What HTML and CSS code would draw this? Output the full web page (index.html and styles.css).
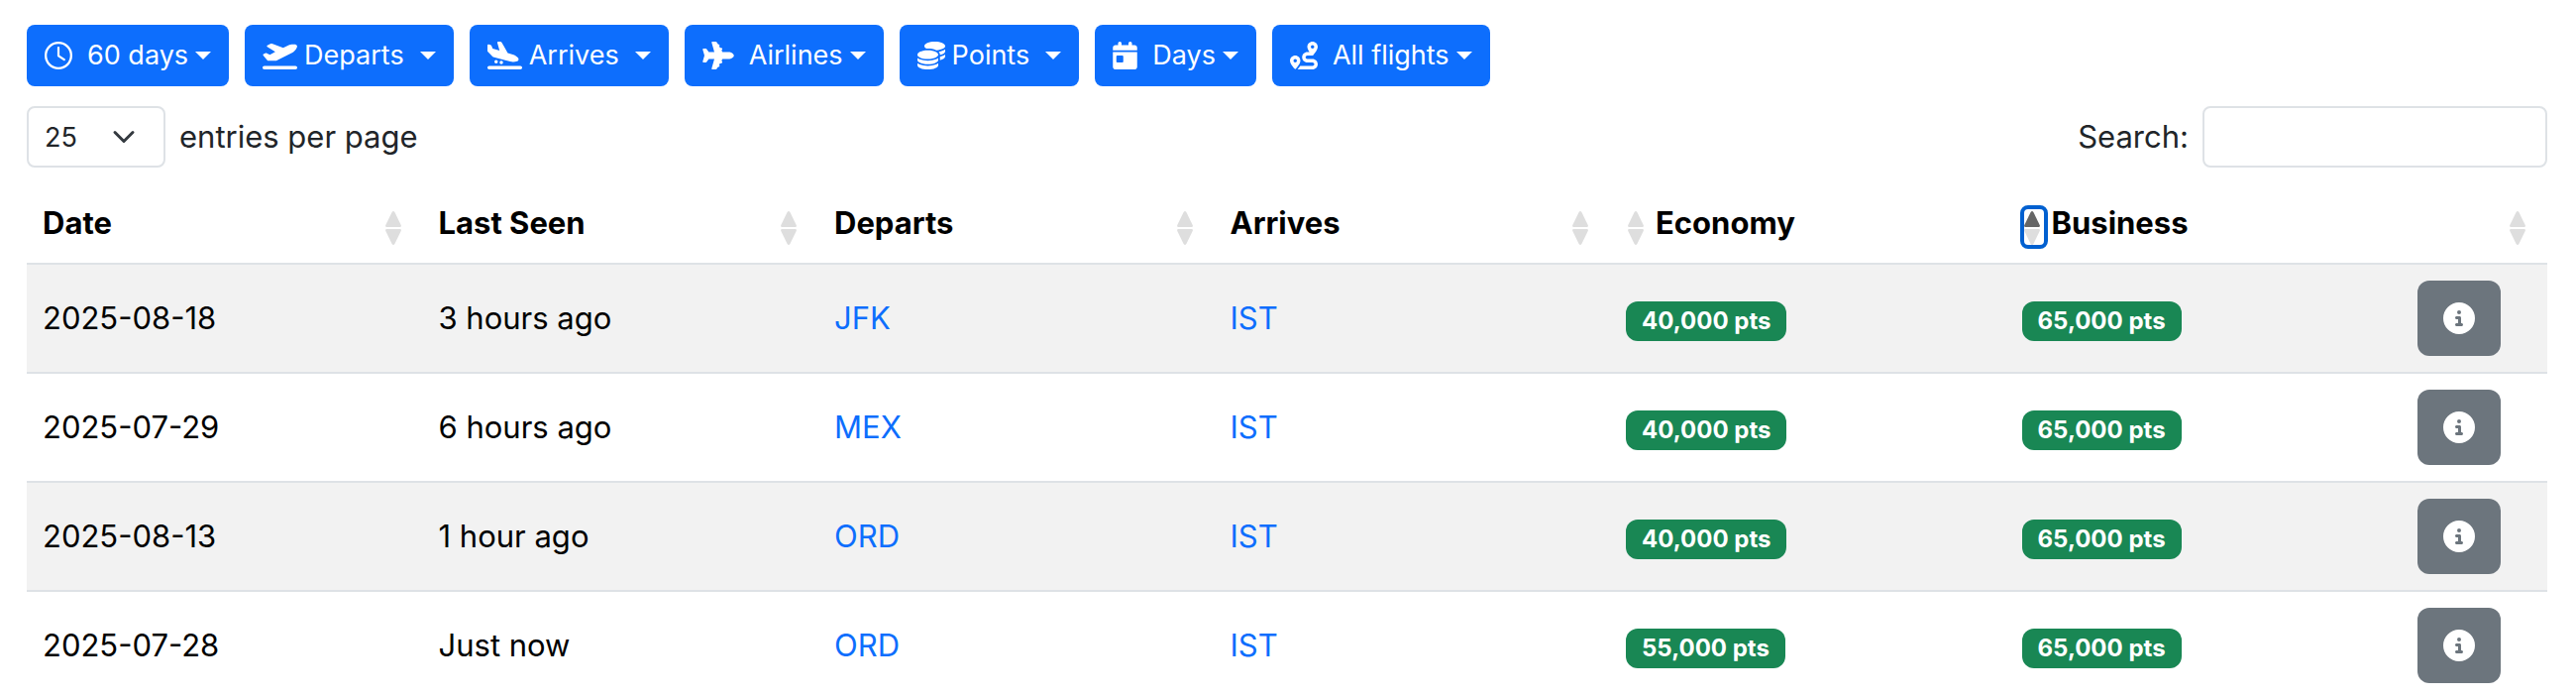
FILE: index.html
```
<!DOCTYPE html>
<html lang="en">
<head>
  <meta charset="UTF-8">
  <meta name="viewport" content="width=device-width, initial-scale=1.0">
  <title>Award Flights</title>
  <link rel="stylesheet" href="styles.css">
</head>
<body>
  <!-- Shared icons -->
  <svg class="sprite" aria-hidden="true">
    <symbol id="icon-sort" viewBox="0 0 20 36">
      <path class="up" d="M6.600 3q1.400-2 2.800 0l6.300 13q.800 2-1.200 2h-13q-2 0-1.200-2z"/>
      <path class="down" d="M6.600 35q1.400 2 2.800 0l6.300-13q.800-2-1.200-2h-13q-2 0-1.200 2z"/>
    </symbol>
    <symbol id="icon-info" viewBox="0 0 512 512">
      <path d="M256 512A256 256 0 1 0 256 0a256 256 0 1 0 0 512zM216 336l24 0 0-64-24 0c-13.300 0-24-10.700-24-24s10.700-24 24-24l48 0c13.300 0 24 10.700 24 24l0 88 8 0c13.300 0 24 10.700 24 24s-10.700 24-24 24l-80 0c-13.300 0-24-10.700-24-24s10.700-24 24-24zm40-208a32 32 0 1 1 0 64 32 32 0 1 1 0-64z"/>
    </symbol>
  </svg>

  <div class="filters">
    <button class="btn" type="button">
      <svg class="icon" viewBox="0 0 512 512"><path d="M470 256A214 214 0 1 1 42 256a214 214 0 1 1 428 0zM0 256a256 256 0 1 0 512 0A256 256 0 1 0 0 256zM236 112l0 150c0 7 3.500 13 9.500 17l104 70c10 6.500 23 4 29.500-6s4-23-6-29.500L276 250 276 112c0-11-9-20-20-20s-20 9-20 20z"/></svg>
      <span class="label">60 days</span>
    </button>
    <button class="btn tight" type="button">
      <svg class="icon wide" viewBox="0 0 640 512"><path d="M381 114.900L186.100 41.800c-16.700-6.200-35.200-5.300-51.100 2.700L89.100 67.400C78 73 77.200 88.500 87.600 95.200l146.900 94.500L136 240 77.800 214.100c-8.700-3.900-18.800-3.700-27.300 .6L18.300 230.800c-9.300 4.700-11.800 16.800-5 24.700l73.100 85.300c6.100 7.100 15 11.200 24.300 11.200l137.700 0c5 0 9.900-1.200 14.300-3.400L535.600 212.200c46.500-23.300 82.500-63.300 100.800-112C645.900 75 627.200 48 600.200 48l-57.400 0c-20.200 0-40.200 4.800-58.200 14L381 114.900zM0 480c0 17.700 14.300 32 32 32l576 0c17.700 0 32-14.300 32-32s-14.300-32-32-32L32 448c-17.700 0-32 14.300-32 32z"/></svg>
      <span class="label">Departs</span>
    </button>
    <button class="btn tight" type="button">
      <svg class="icon wide" viewBox="0 0 640 512"><path d="M.3 166.900L0 68C0 57.700 9.500 50.100 19.500 52.300l35.600 7.900c10.600 2.300 19.200 9.900 23 20L96 128l127.300 37.600L181.800 20.400C178.900 10.200 186.600 0 197.200 0l40.100 0c11.600 0 22.200 6.200 27.900 16.300l109 193.800 107.200 31.700c15.900 4.700 30.800 12.500 43.700 22.800l34.400 27.600c24 19.200 18.100 57.300-10.700 68.200c-41.200 15.600-86.200 18.100-128.800 7L121.700 289.800c-11-2.900-21.200-8.700-29.300-16.900L9.500 189.400c-5.900-6-9.300-14.100-9.300-22.500zM32 448l576 0c17.700 0 32 14.300 32 32s-14.300 32-32 32L32 512c-17.700 0-32-14.300-32-32s14.300-32 32-32zm96-80a32 32 0 1 1 64 0 32 32 0 1 1 -64 0zm128-16a32 32 0 1 1 0 64 32 32 0 1 1 0-64z"/></svg>
      <span class="label">Arrives</span>
    </button>
    <button class="btn" type="button">
      <svg class="icon plane" viewBox="0 0 576 512"><path d="M482.300 192c34.200 0 93.700 29 93.700 64c0 36-59.500 64-93.700 64l-116.600 0L265.200 495.900c-5.700 10-16.300 16.100-27.800 16.100l-56.200 0c-10.600 0-18.300-10.200-15.400-20.400l49-171.600L112 320 68.800 377.600c-3 4-7.800 6.400-12.800 6.400l-42 0c-7.800 0-14-6.300-14-14c0-1.300 .2-2.600 .5-3.900L32 256 .5 145.900c-.4-1.300-.5-2.600-.5-3.900c0-7.800 6.300-14 14-14l42 0c5 0 9.800 2.400 12.800 6.400L112 192l102.900 0-49-171.600C162.900 10.200 170.600 0 181.200 0l56.200 0c11.500 0 22.100 6.200 27.800 16.100L365.700 192l116.600 0z"/><path d="M270 48h20a22 22 0 0 1 0 44h-20zM310 112h28a24 24 0 0 1 0 48h-28zM270 464h20a22 22 0 0 0 0-44h-20zM310 400h28a24 24 0 0 0 0-48h-28z"/></svg>
      <span class="label">Airlines</span>
    </button>
    <button class="btn tight" type="button">
      <svg class="icon" viewBox="0 0 512 512"><path d="M512 80c0 18-14.300 34.600-38.400 48c-29.100 16.100-72.500 27.500-122.300 30.900c-3.700-1.800-7.400-3.500-11.300-5C300.600 137.400 248.200 128 192 128c-8.300 0-16.400 .2-24.500 .6l-1.100-.6C142.300 114.600 128 98 128 80c0-44.200 86-80 192-80S512 35.800 512 80zM160.700 161.100c10.200-.7 20.700-1.100 31.300-1.100c62.200 0 117.400 12.300 152.500 31.400C369.300 204.900 384 221.700 384 240c0 4-.7 7.900-2.100 11.700c-4.600 13.200-17 25.300-35 35.500c-.4 .2-.9 .5-1.300 .7c-35 19.400-90.800 32-153.600 32c-59.600 0-112.900-11.300-148.200-29.100c-1.900-.9-3.700-1.900-5.500-2.900C14.300 274.600 0 258 0 240c0-34.800 53.400-64.500 128-75.400c10.500-1.500 21.400-2.700 32.700-3.500zM416 240c0-21.900-10.600-39.900-24.100-53.400c28.300-4.400 54.200-11.400 76.200-20.500c16.300-6.800 31.500-15.200 43.900-25.500l0 35.400c0 19.300-16.500 37.100-43.800 50.900c-14.600 7.400-32.400 13.700-52.400 18.500c.1-1.800 .2-3.500 .2-5.300zm-32 96c0 18-14.300 34.600-38.400 48c-1.800 1-3.600 1.900-5.500 2.900C304.900 404.700 251.600 416 192 416c-62.800 0-118.600-12.600-153.600-32C14.300 370.600 0 354 0 336l0-35.400c12.500 10.300 27.600 18.700 43.900 25.500C83.400 342.600 135.800 352 192 352s108.600-9.400 148.100-25.900c7.800-3.200 15.300-6.900 22.400-10.900c6.100-3.400 11.800-7.200 17.200-11.200c1.500-1.100 2.900-2.300 4.300-3.400l0 3.400 0 5.700 0 26.300zm32 0l0-32 0-25.900c19-4.200 36.500-9.500 52.100-16c16.300-6.800 31.500-15.200 43.900-25.500l0 35.400c0 10.500-5 21-14.900 30.900c-16.300 16.300-45 29.700-81.300 38.400c.1-1.700 .2-3.500 .2-5.300zM192 448c56.200 0 108.600-9.400 148.100-25.900c16.300-6.800 31.500-15.200 43.900-25.500l0 35.400c0 44.200-86 80-192 80S0 476.200 0 432l0-35.400c12.500 10.300 27.600 18.700 43.900 25.500C83.400 438.600 135.800 448 192 448z"/></svg>
      <span class="label">Points</span>
    </button>
    <button class="btn" type="button">
      <svg class="icon narrow" viewBox="0 0 448 512"><path d="M128 0c17.700 0 32 14.300 32 32l0 32 128 0 0-32c0-17.700 14.300-32 32-32s32 14.300 32 32l0 32 48 0c26.500 0 48 21.500 48 48l0 48L0 160l0-48C0 85.500 21.500 64 48 64l48 0 0-32c0-17.700 14.300-32 32-32zM0 192l448 0 0 272c0 26.500-21.500 48-48 48L48 512c-26.500 0-48-21.500-48-48L0 192zm80 64c-8.800 0-16 7.200-16 16l0 96c0 8.800 7.200 16 16 16l96 0c8.800 0 16-7.200 16-16l0-96c0-8.800-7.200-16-16-16l-96 0z"/></svg>
      <span class="label">Days</span>
    </button>
    <button class="btn" type="button">
      <svg class="icon" viewBox="0 0 512 512"><path d="M512 96c0 50.200-59.100 125.100-84.600 155c-3.800 4.400-9.400 6.100-14.500 5L320 256c-17.700 0-32 14.300-32 32s14.300 32 32 32l96 0c53 0 96 43 96 96s-43 96-96 96l-276.400 0c8.700-9.900 19.300-22.600 30-36.800c6.300-8.400 12.800-17.600 19-27.200L416 448c17.700 0 32-14.300 32-32s-14.300-32-32-32l-96 0c-53 0-96-43-96-96s43-96 96-96l39.800 0c-21-31.500-39.800-67.700-39.800-96c0-53 43-96 96-96s96 43 96 96zM117.100 489.100c-3.800 4.300-7.200 8.100-10.100 11.300l-1.800 2-.2-.2c-6 4.600-14.600 4-20-1.800C59.800 473 0 402.500 0 352c0-53 43-96 96-96s96 43 96 96c0 30-21.100 67-43.500 97.900c-10.700 14.700-21.700 28-30.800 38.500l-.6 .7zM128 352a32 32 0 1 0 -64 0 32 32 0 1 0 64 0zM416 128a32 32 0 1 0 0-64 32 32 0 1 0 0 64z"/></svg>
      <span class="label">All flights</span>
    </button>
  </div>

  <div class="controls">
    <div class="length">
      <div class="select-wrap">
        <select id="length">
          <option>10</option>
          <option selected>25</option>
          <option>50</option>
          <option>100</option>
        </select>
        <svg class="chevron" viewBox="0 0 16 16"><path d="m2 5 6 6 6-6"/></svg>
      </div>
      <label for="length">entries per page</label>
    </div>
    <div class="search">
      <label for="search">Search:</label>
      <input type="search" id="search">
    </div>
  </div>

  <table class="flights">
    <thead>
      <tr>
        <th><div class="head"><span>Date</span><svg class="sort"><use href="#icon-sort"/></svg></div></th>
        <th><div class="head"><span>Last Seen</span><svg class="sort"><use href="#icon-sort"/></svg></div></th>
        <th><div class="head"><span>Departs</span><svg class="sort"><use href="#icon-sort"/></svg></div></th>
        <th><div class="head"><span>Arrives</span><svg class="sort"><use href="#icon-sort"/></svg></div></th>
        <th><div class="head number"><span>Economy</span><svg class="sort"><use href="#icon-sort"/></svg></div></th>
        <th><div class="head number"><span>Business</span><svg class="sort active"><use href="#icon-sort"/></svg></div></th>
        <th class="actions"><div class="head"><span></span><svg class="sort"><use href="#icon-sort"/></svg></div></th>
      </tr>
    </thead>
    <tbody>
      <tr>
        <td>2025-08-18</td>
        <td>3 hours ago</td>
        <td><a href="#">JFK</a></td>
        <td><a href="#">IST</a></td>
        <td><span class="badge">40,000 pts</span></td>
        <td><span class="badge">65,000 pts</span></td>
        <td><button class="info" type="button" aria-label="Details"><svg><use href="#icon-info"/></svg></button></td>
      </tr>
      <tr>
        <td>2025-07-29</td>
        <td>6 hours ago</td>
        <td><a href="#">MEX</a></td>
        <td><a href="#">IST</a></td>
        <td><span class="badge">40,000 pts</span></td>
        <td><span class="badge">65,000 pts</span></td>
        <td><button class="info" type="button" aria-label="Details"><svg><use href="#icon-info"/></svg></button></td>
      </tr>
      <tr>
        <td>2025-08-13</td>
        <td>1 hour ago</td>
        <td><a href="#">ORD</a></td>
        <td><a href="#">IST</a></td>
        <td><span class="badge">40,000 pts</span></td>
        <td><span class="badge">65,000 pts</span></td>
        <td><button class="info" type="button" aria-label="Details"><svg><use href="#icon-info"/></svg></button></td>
      </tr>
      <tr>
        <td>2025-07-28</td>
        <td>Just now</td>
        <td><a href="#">ORD</a></td>
        <td><a href="#">IST</a></td>
        <td><span class="badge">55,000 pts</span></td>
        <td><span class="badge">65,000 pts</span></td>
        <td><button class="info" type="button" aria-label="Details"><svg><use href="#icon-info"/></svg></button></td>
      </tr>
    </tbody>
  </table>
</body>
</html>
```
FILE: styles.css
```
* {
  box-sizing: border-box;
}

body {
  margin: 0;
  padding: 25px 29px 0 27px;
  font-family: Inter, 'Liberation Sans', sans-serif;
  font-size: 31px;
  line-height: 48px;
  color: #212529;
  background: #fff;
}

button,
select,
input {
  font-family: inherit;
}

.sprite {
  display: none;
}

/* Filter buttons */
.filters {
  display: flex;
  flex-wrap: wrap;
  gap: 16px;
}

.btn {
  display: flex;
  align-items: center;
  height: 62px;
  padding: 0 18px;
  border: none;
  border-radius: 8px;
  background: #0d6efd;
  color: #fff;
  font-size: 27px;
  line-height: 42px;
  white-space: nowrap;
  cursor: pointer;
}

.btn:hover {
  background: #0b5ed7;
}

.btn::after {
  content: "";
  border-top: 8px solid;
  border-right: 8px solid transparent;
  border-left: 8px solid transparent;
}

.icon {
  width: 28px;
  height: 28px;
  fill: currentColor;
}

.icon.wide {
  width: 35px;
}

.icon.plane {
  width: 32px;
}

.icon.narrow {
  width: 25px;
}

.label {
  margin: 0 7px 0 15px;
}

.tight .label {
  margin: 0 16px 0 7px;
}

/* Page length and search */
.controls {
  display: flex;
  justify-content: space-between;
  margin: 20px 0 16px;
}

.length,
.search {
  display: flex;
  align-items: center;
  gap: 14px;
}

.select-wrap {
  position: relative;
}

.controls select,
.controls input {
  display: block;
  height: 62px;
  padding: 0 16px;
  border: 2px solid #dee2e6;
  border-radius: 8px;
  background: #fff;
  color: #212529;
  font-size: 27px;
}

.controls select {
  width: 140px;
  appearance: none;
}

.controls input {
  width: 348px;
}

.chevron {
  position: absolute;
  top: 19px;
  right: 30px;
  width: 24px;
  height: 24px;
  fill: none;
  stroke: #343a40;
  stroke-width: 2;
  stroke-linecap: round;
  stroke-linejoin: round;
  pointer-events: none;
}

/* Flights table */
.flights {
  width: 100%;
  table-layout: fixed;
  border-collapse: separate;
  border-spacing: 0;
  color: #000;
}

.flights th,
.flights td {
  padding: 16px;
  border-bottom: 2px solid #dee2e6;
  text-align: left;
  vertical-align: middle;
}

.flights tbody tr:nth-child(odd) {
  background: #f2f2f2;
}

.flights tbody tr:last-child td {
  border-bottom: none;
}

.flights .actions {
  width: 147px;
}

.flights a {
  color: #0d6efd;
  text-decoration: none;
}

.head {
  display: flex;
  align-items: center;
  justify-content: space-between;
}

.head.number {
  flex-direction: row-reverse;
  justify-content: flex-end;
  gap: 6px;
}

.sort {
  width: 20px;
  height: 36px;
  margin: 8px 2px 0;
  border-radius: 4px;
  fill: #dedede;
}

.up {
  fill: var(--up, #dedede);
}

.sort.active {
  --up: #666;
  outline: 4px solid #0060d0;
}

.badge {
  display: inline-block;
  padding: 0 16px;
  border-radius: 12px;
  background: #198754;
  color: #fff;
  font-size: 24px;
  font-weight: 700;
  line-height: 40px;
}

.info {
  display: flex;
  align-items: center;
  justify-content: center;
  width: 84px;
  height: 76px;
  padding: 0;
  border: none;
  border-radius: 12px;
  background: #6c757d;
  cursor: pointer;
}

.info svg {
  width: 32px;
  height: 32px;
  fill: #fff;
}
```
